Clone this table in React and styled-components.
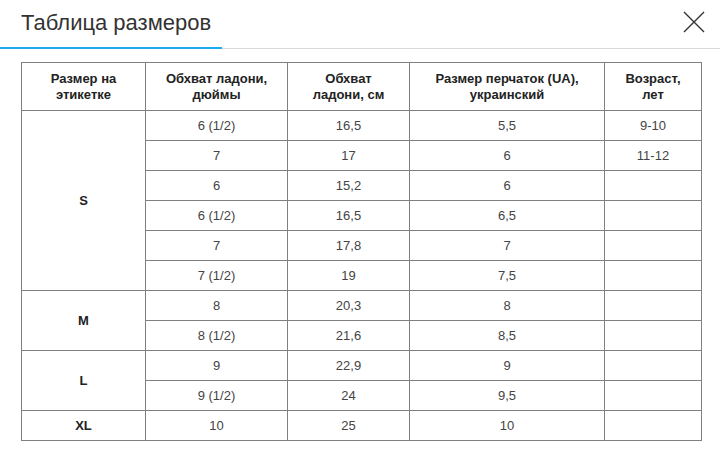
import styled, { createGlobalStyle } from "styled-components";

const GlobalStyle = createGlobalStyle`
    html, body {
        margin: 0;
        padding: 0;
        background: #fff;
        font-family: "Liberation Sans", Arial, sans-serif;
    }
`;

const Header = styled.div`
    height: 49px;
    display: flex;
    flex-direction: column;
`;

const HeaderRow = styled.div`
    flex: 1;
    display: flex;
    align-items: center;
    justify-content: space-between;
    padding: 0 15px 0 21px;
`;

const Divider = styled.div`
    display: flex;
    align-items: flex-start;
    height: 1px;
    background: #d9d9d9;
`;

const DividerActive = styled.div`
    width: 222px;
    height: 2px;
    margin-top: -1px;
    background: #1eaaf1;
`;

const Title = styled.h2`
    margin: 0;
    font-weight: 400;
    font-size: 22px;
    color: #333;
    padding-bottom: 3px;
`;

const CloseButton = styled.button`
    border: none;
    background: none;
    padding: 0;
    width: 22px;
    height: 22px;
    cursor: pointer;
    margin-bottom: 4px;
    & svg {
        display: block;
    }
`;

const Body = styled.div`
    padding: 13px 20px 0 21px;
`;

const Table = styled.table`
    border-collapse: collapse;
    width: 680px;
    table-layout: fixed;
    font-size: 13px;
    color: #444;
`;

const Th = styled.th`
    border: 1px solid #808080;
    height: 47px;
    padding: 0 6px;
    font-weight: 700;
    color: #222;
    line-height: 16px;
    text-align: center;
`;

const Td = styled.td`
    border: 1px solid #808080;
    height: 29px;
    padding: 0 6px;
    text-align: center;
    font-weight: ${p => (p.$bold ? 700 : 400)};
    color: ${p => (p.$bold ? "#222" : "#444")};
`;

const columns = [
    { w: 124, title: ["Размер на", "этикетке"] },
    { w: 142, title: ["Обхват ладони,", "дюймы"] },
    { w: 122, title: ["Обхват", "ладони, см"] },
    { w: 195, title: ["Размер перчаток (UA),", "украинский"] },
    { w: 97, title: ["Возраст,", "лет"] },
];

const groups = [
    {
        size: "S",
        rows: [
            ["6 (1/2)", "16,5", "5,5", "9-10"],
            ["7", "17", "6", "11-12"],
            ["6", "15,2", "6", ""],
            ["6 (1/2)", "16,5", "6,5", ""],
            ["7", "17,8", "7", ""],
            ["7 (1/2)", "19", "7,5", ""],
        ],
    },
    {
        size: "M",
        rows: [
            ["8", "20,3", "8", ""],
            ["8 (1/2)", "21,6", "8,5", ""],
        ],
    },
    {
        size: "L",
        rows: [
            ["9", "22,9", "9", ""],
            ["9 (1/2)", "24", "9,5", ""],
        ],
    },
    {
        size: "XL",
        rows: [["10", "25", "10", ""]],
    },
];

export default function App() {
    return (
        <>
            <GlobalStyle />
            <Header>
                <HeaderRow>
                    <Title>Таблица размеров</Title>
                    <CloseButton aria-label="close">
                        <svg width="22" height="22" viewBox="0 0 22 22">
                            <path d="M1 1L21 21M21 1L1 21" stroke="#333" strokeWidth="1.4" fill="none" />
                        </svg>
                    </CloseButton>
                </HeaderRow>
                <Divider>
                    <DividerActive />
                </Divider>
            </Header>
            <Body>
                <Table>
                    <colgroup>
                        {columns.map((c, i) => <col key={i} style={{ width: c.w }} />)}
                    </colgroup>
                    <thead>
                        <tr>
                            {columns.map((c, i) => (
                                <Th key={i}>
                                    {c.title[0]}
                                    <br />
                                    {c.title[1]}
                                </Th>
                            ))}
                        </tr>
                    </thead>
                    <tbody>
                        {groups.map(g =>
                            g.rows.map((r, i) => (
                                <tr key={g.size + i}>
                                    {i === 0 && (
                                        <Td $bold rowSpan={g.rows.length}>{g.size}</Td>
                                    )}
                                    {r.map((v, j) => <Td key={j}>{v}</Td>)}
                                </tr>
                            ))
                        )}
                    </tbody>
                </Table>
            </Body>
        </>
    );
}
